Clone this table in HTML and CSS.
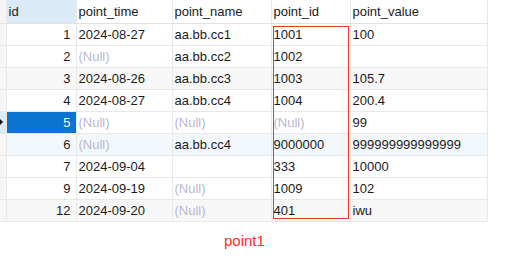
FILE: index.html
```html
<!DOCTYPE html>
<html>
<head>
<meta charset="utf-8">
<link rel="stylesheet" href="styles.css">
</head>
<body>
<div class="wrap">
<table class="grid">
<colgroup>
<col class="c-g"><col class="c-id"><col class="c-time"><col class="c-name"><col class="c-pid"><col class="c-val">
</colgroup>
<thead>
<tr><th class="g"></th><th class="hid">id</th><th>point_time</th><th>point_name</th><th>point_id</th><th>point_value</th></tr>
</thead>
<tbody>
<tr><td class="g"></td><td class="num">1</td><td>2024-08-27</td><td>aa.bb.cc1</td><td>1001</td><td>100</td></tr>
<tr><td class="g"></td><td class="num">2</td><td class="null">(Null)</td><td>aa.bb.cc2</td><td>1002</td><td></td></tr>
<tr class="alt"><td class="g"></td><td class="num">3</td><td>2024-08-26</td><td>aa.bb.cc3</td><td>1003</td><td>105.7</td></tr>
<tr><td class="g"></td><td class="num">4</td><td>2024-08-27</td><td>aa.bb.cc4</td><td>1004</td><td>200.4</td></tr>
<tr class="cur"><td class="g"><span class="arrow"></span></td><td class="num sel">5</td><td class="null">(Null)</td><td class="null">(Null)</td><td class="null">(Null)</td><td>99</td></tr>
<tr class="hl"><td class="g"></td><td class="num">6</td><td class="null">(Null)</td><td>aa.bb.cc4</td><td>9000000</td><td>999999999999999</td></tr>
<tr><td class="g"></td><td class="num">7</td><td>2024-09-04</td><td></td><td>333</td><td>10000</td></tr>
<tr><td class="g"></td><td class="num">9</td><td>2024-09-19</td><td class="null">(Null)</td><td>1009</td><td>102</td></tr>
<tr class="alt"><td class="g"></td><td class="num">12</td><td>2024-09-20</td><td class="null">(Null)</td><td>401</td><td>iwu</td></tr>
</tbody>
</table>
<div class="mark"></div>
<div class="caption">point1</div>
</div>
</body>
</html>
```
FILE: styles.css
```css
html, body {
  margin: 0;
  padding: 0;
  background: #ffffff;
}
.wrap {
  position: relative;
  width: 523px;
  height: 258px;
  font-family: "Liberation Sans", Arial, sans-serif;
  font-size: 13px;
  color: #1b1b1b;
}
.grid {
  border-collapse: collapse;
  table-layout: fixed;
  width: 487px;
}
.c-g { width: 6px; }
.c-id { width: 70px; }
.c-time { width: 96px; }
.c-name { width: 99px; }
.c-pid { width: 79px; }
.c-val { width: 137px; }
.grid th, .grid td {
  height: 21px;
  padding: 0 3px 0 2px;
  border: 1px solid #e8e8e8;
  border-top: none;
  text-align: left;
  font-weight: normal;
  white-space: nowrap;
  overflow: hidden;
  line-height: 21px;
  box-sizing: border-box;
}
.grid tr > :first-child { border-left: none; }
.grid th {
  height: 23px;
  background: #ffffff;
  border-top: none;
  border-bottom: 1px solid #e2e2e2;
}
.grid th.hid { background: #dbeaf7; }
.grid .g {
  padding: 0;
  background: #f6f6f6;
  position: relative;
}
.grid thead th.g { background: #f4f4f4; }
.grid td.num {
  text-align: right;
  padding-right: 5px;
}
.grid .null { color: #b9b7d0; }
.grid tr.alt td { background: #f7f7f7; }
.grid tr.hl td { background: #f3f8fd; }
.grid tr.alt td.g, .grid tr.hl td.g { background: #f6f6f6; }
.grid tr.cur td.g { background: #dbeaf7; }
.grid td.sel {
  background: #0a74d0;
  color: #ffffff;
}
.arrow {
  position: absolute;
  left: 0;
  top: 7px;
  width: 0;
  height: 0;
  border-top: 3px solid transparent;
  border-bottom: 3px solid transparent;
  border-left: 3px solid #111111;
}
.mark {
  position: absolute;
  left: 273px;
  top: 26px;
  width: 74px;
  height: 191px;
  border: 1px solid #ec3b24;
}
.caption {
  position: absolute;
  left: 224px;
  top: 232px;
  font-size: 15px;
  color: #fb2a2a;
}
```
